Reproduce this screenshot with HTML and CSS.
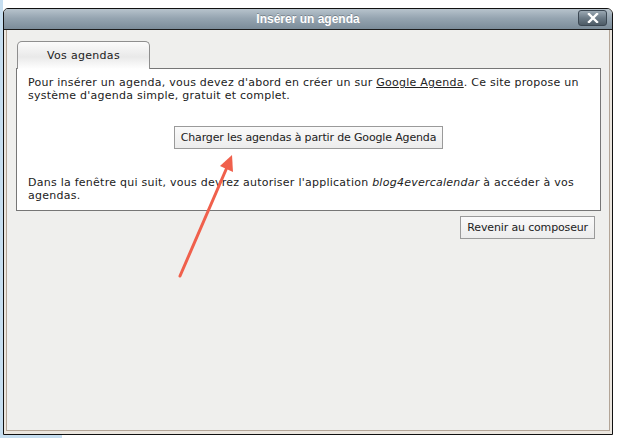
FILE: index.html
```html
<!DOCTYPE html>
<html lang="fr">
<head>
    <meta charset="UTF-8">
    <title>Insérer un agenda</title>
    <link rel="stylesheet" href="styles.css">
</head>
<body>
    <div class="dialog">
        <div class="titlebar">
            <span></span>
            <h1 class="title">Insérer un agenda</h1>
            <button class="close" title="Fermer">
                <svg width="12" height="10" viewBox="0 0 12 10">
                    <path d="M2 1 L10 9 M10 1 L2 9" stroke="#fff" stroke-width="2.4" stroke-linecap="square"/>
                </svg>
            </button>
        </div>
        <div class="frame">
            <div class="panel">
                <div class="tabs">
                    <div class="tab">Vos agendas</div>
                </div>
                <div class="tab-content">
                    <p>Pour insérer un agenda, vous devez d'abord en créer un sur <a href="#">Google Agenda</a>. Ce site propose un système d'agenda simple, gratuit et complet.</p>
                    <div class="actions">
                        <button class="btn">Charger les agendas à partir de Google Agenda</button>
                    </div>
                    <p>Dans la fenêtre qui suit, vous devrez autoriser l'application <em>blog4evercalendar</em> à accéder à vos agendas.</p>
                </div>
                <div class="footer">
                    <button class="btn">Revenir au composeur</button>
                </div>
            </div>
        </div>
    </div>
    <div class="under"></div>

    <!-- annotation arrow drawn over the screenshot -->
    <svg class="arrow" width="619" height="438" viewBox="0 0 619 438">
        <line x1="180" y1="276" x2="228" y2="165" stroke="#f0604c" stroke-width="3" stroke-linecap="round"/>
        <polygon points="232,155 233,172 220,166" fill="#f0604c"/>
    </svg>
</body>
</html>
```

FILE: styles.css
```css
body {
    margin: 0;
    padding-top: 8px;
    background: linear-gradient(to right, #c6def0 3px, #fff 3px);
    font-family: "DejaVu Sans", Verdana, sans-serif;
    font-size: 11px;
    line-height: 13px;
    color: #222;
    position: relative;
    height: 430px;
    overflow: hidden;
}
.dialog {
    margin-left: 3px;
    width: 610px;
    box-sizing: border-box;
    border: 1px solid #111;
    border-radius: 5px 6px 0 0;
    background: #ebe6df;
    overflow: hidden;
}
.titlebar {
    display: grid;
    grid-template-columns: 1fr auto 1fr;
    align-items: start;
    height: 20px;
    background: linear-gradient(#b7c3cc, #96a5b1 45%, #7b8c99);
    border-bottom: 1px solid #1c1c1c;
}
.title {
    margin: 3px 0 0;
    font-family: "Liberation Sans", Arial, sans-serif;
    font-size: 12px;
    font-weight: bold;
    line-height: 14px;
    color: #fff;
    text-shadow: 0 -1px 0 rgba(0, 0, 0, 0.25);
}
.close {
    justify-self: end;
    margin: 1px 5px 0 0;
    width: 29px;
    height: 16px;
    padding: 0;
    border: 1px solid #3c4853;
    border-radius: 3px;
    background: linear-gradient(#9aa8b3, #6c7b87 50%, #4d5b66);
    display: flex;
    justify-content: center;
    align-items: center;
}
.frame {
    padding: 0 2px 3px;
}
.panel {
    height: 401px;
    box-sizing: border-box;
    border: 1px solid #b3a597;
    border-top: none;
    background: #efefed;
    padding: 11px 8px 0 9px;
}
.tabs {
    display: flex;
}
.tab {
    position: relative;
    margin: 0 0 -1px 1px;
    width: 133px;
    height: 28px;
    box-sizing: border-box;
    border: 1px solid #8e8e8e;
    border-bottom: none;
    border-radius: 5px 5px 0 0;
    background: linear-gradient(#fbfbfb, #e9e9e9 55%, #fff);
    display: flex;
    justify-content: center;
    align-items: center;
    padding-bottom: 1px;
    letter-spacing: 0.3px;
}
.tab-content {
    width: 585px;
    box-sizing: border-box;
    border: 1px solid #767676;
    background: #fff;
    padding: 7px 11px 8px;
}
.tab-content p {
    margin: 0;
    letter-spacing: 0.25px;
}
.tab-content a {
    color: #222;
}
.actions {
    margin: 24px 0 27px;
    text-align: center;
}
.btn {
    height: 23px;
    padding: 0 6px;
    font-family: "DejaVu Sans", Verdana, sans-serif;
    font-size: 11px;
    letter-spacing: -0.15px;
    color: #222;
    border: 1px solid #9a9a9a;
    background: linear-gradient(#fafafa, #ececec);
}
.footer {
    margin-top: 5px;
    padding-right: 6px;
    text-align: right;
}
.under {
    width: 62px;
    height: 3px;
    background: #c6def0;
}
.arrow {
    position: absolute;
    top: 0;
    left: 0;
    pointer-events: none;
}
```
